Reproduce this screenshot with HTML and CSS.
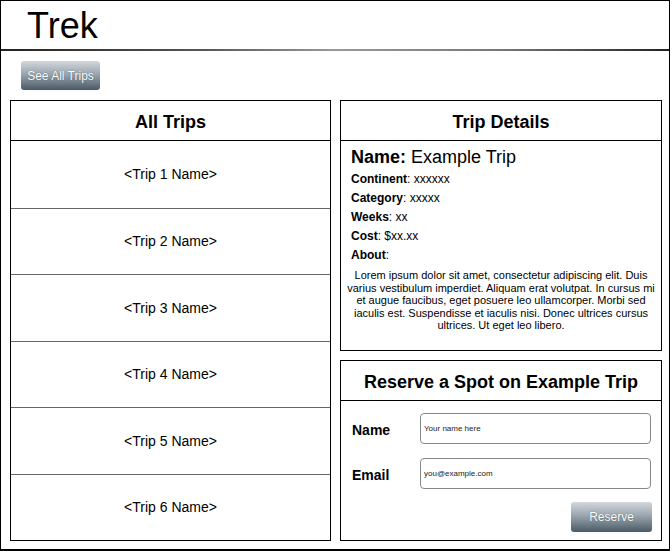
FILE: index.html
```html
<!DOCTYPE html>
<html>
<head>
<meta charset="utf-8">
<title>Trek</title>
<link rel="stylesheet" href="styles.css">
</head>
<body>
<div class="frame">
  <header class="topbar">
    <h1 class="logo">Trek</h1>
  </header>
  <div class="toolbar">
    <button class="btn btn-all">See All Trips</button>
  </div>
  <main class="columns">
    <section class="panel trips">
      <h2 class="panel-title">All Trips</h2>
      <ul class="trip-list">
        <li class="trip">&lt;Trip 1 Name&gt;</li>
        <li class="trip">&lt;Trip 2 Name&gt;</li>
        <li class="trip">&lt;Trip 3 Name&gt;</li>
        <li class="trip">&lt;Trip 4 Name&gt;</li>
        <li class="trip">&lt;Trip 5 Name&gt;</li>
        <li class="trip">&lt;Trip 6 Name&gt;</li>
      </ul>
    </section>
    <div class="side">
      <section class="panel details">
        <h2 class="panel-title">Trip Details</h2>
        <div class="details-body">
          <p class="name-line"><b>Name:</b> Example Trip</p>
          <p class="field"><b>Continent</b>: xxxxxx</p>
          <p class="field"><b>Category</b>: xxxxx</p>
          <p class="field"><b>Weeks</b>: xx</p>
          <p class="field"><b>Cost</b>: $xx.xx</p>
          <p class="field"><b>About</b>:</p>
          <p class="about">Lorem ipsum dolor sit amet, consectetur adipiscing elit. Duis varius vestibulum imperdiet. Aliquam erat volutpat. In cursus mi et augue faucibus, eget posuere leo ullamcorper. Morbi sed iaculis est. Suspendisse et iaculis nisi. Donec ultrices cursus ultrices. Ut eget leo libero.</p>
        </div>
      </section>
      <section class="panel reserve">
        <h2 class="panel-title">Reserve a Spot on Example Trip</h2>
        <form class="reserve-form">
          <label class="row"><span class="label">Name</span><input class="input" type="text" placeholder="Your name here"></label>
          <label class="row"><span class="label">Email</span><input class="input" type="text" placeholder="you@example.com"></label>
          <div class="actions"><button type="button" class="btn btn-reserve">Reserve</button></div>
        </form>
      </section>
    </div>
  </main>
</div>
</body>
</html>
```
FILE: styles.css
```css
* { box-sizing: border-box; }
html, body { margin: 0; padding: 0; background: #fff; }
body { font-family: "Liberation Sans", Arial, sans-serif; color: #000; }

.frame {
  width: 670px;
  height: 551px;
  border: 1px solid #000;
  border-bottom-width: 2px;
  display: flex;
  flex-direction: column;
}

.topbar {
  height: 50px;
  border-bottom: 2px solid #000;
  border-image: linear-gradient(90deg, #222 0%, #555 30%, #999 50%, #777 75%, #222 100%) 1;
  padding-left: 26px;
  display: flex;
  align-items: center;
}
.logo {
  margin: 0;
  font-size: 36px;
  font-weight: normal;
  line-height: 1;
  position: relative;
  top: 1px;
}

.toolbar {
  padding: 10px 0 0 20px;
}

.btn {
  border: none;
  border-radius: 3px;
  background: linear-gradient(180deg, #d3d8dc 0%, #9aa5ae 45%, #4a5a66 100%);
  color: #fff;
  font-family: "Liberation Sans", Arial, sans-serif;
  font-size: 12px;
  text-shadow: 0 0 1px rgba(0,0,0,0.5);
  padding: 0;
  cursor: pointer;
}
.btn-all { width: 79px; height: 29px; }

.columns {
  display: grid;
  grid-template-columns: 321px 322px;
  column-gap: 9px;
  padding: 10px 0 0 9px;
}

.panel {
  border: 1px solid #000;
  background: #fff;
}
.panel-title {
  margin: 0;
  height: 40px;
  padding-top: 3px;
  border-bottom: 1px solid #000;
  font-size: 18px;
  font-weight: bold;
  display: flex;
  align-items: center;
  justify-content: center;
}

.trips { height: 441px; display: flex; flex-direction: column; }
.trip-list {
  list-style: none;
  margin: 0;
  padding: 0;
  flex: 1;
  display: grid;
  grid-template-rows: repeat(6, 1fr);
}
.trip {
  display: flex;
  align-items: center;
  justify-content: center;
  font-size: 14px;
  border-top: 1px solid #666;
}
.trip:first-child { border-top: none; }

.side {
  display: flex;
  flex-direction: column;
  gap: 9px;
}
.details { height: 251px; }
.details-body { padding: 6px 10px 0 10px; }
.details-body p { margin: 0; }
.name-line { font-size: 18px; line-height: 20px; margin-bottom: 3px !important; }
.field { font-size: 12px; line-height: 19px; }
.about {
  font-size: 11px;
  line-height: 12.6px;
  text-align: center;
  margin: 4px -9px 0 -9px !important;
}

.reserve { height: 181px; }
.reserve-form { padding: 11px 9px 0 11px; }
.row {
  display: flex;
  align-items: center;
  height: 32px;
  margin-bottom: 13px;
}
.label {
  width: 68px;
  padding-top: 3px;
  font-size: 14px;
  font-weight: bold;
}
.input {
  width: 231px;
  height: 31px;
  border: 1px solid #888;
  border-radius: 4px;
  padding: 0 3px;
  font-family: "Liberation Sans", Arial, sans-serif;
  font-size: 8px;
  outline: none;
}
.input::placeholder { color: #222; opacity: 1; }
.actions {
  display: flex;
  justify-content: flex-end;
}
.btn-reserve { width: 81px; height: 30px; font-size: 12px; }
```
